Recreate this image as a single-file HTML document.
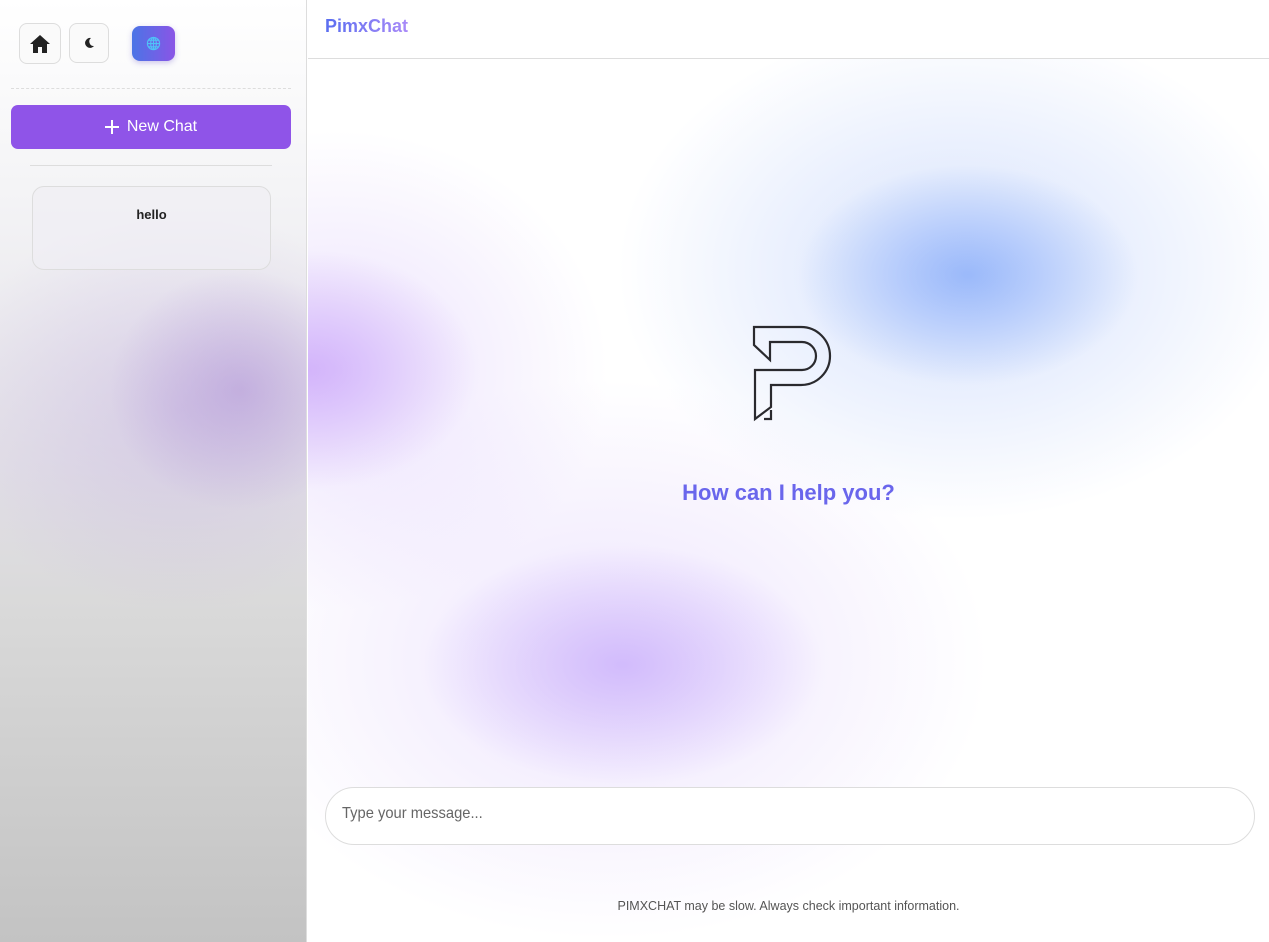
<!DOCTYPE html>
<html><head><meta charset="utf-8"><style>
*{box-sizing:border-box;margin:0;padding:0}
body{width:1269px;height:942px;overflow:hidden;font-family:"Liberation Sans",sans-serif;position:relative;background:#fff}
.side{position:absolute;left:0;top:0;width:307px;height:942px;border-right:1px solid #ddd;
background:
radial-gradient(ellipse 130px 120px at 240px 390px,rgba(175,145,215,.55),rgba(175,145,215,0) 100%),
radial-gradient(ellipse 240px 200px at 180px 410px,rgba(195,175,225,.45),rgba(195,175,225,0) 100%),
linear-gradient(180deg,#fff 0%,#f4f4f6 20%,#e2e0e6 50%,#d9d9d9 65%,#c3c3c3 100%);}
.btn{position:absolute;top:23px;width:40px;height:40px;border:1px solid #ddd;border-radius:8px;background:#fafafa;display:flex;align-items:center;justify-content:center}
.glb{position:absolute;left:132px;top:26px;width:43px;height:35px;border-radius:8px;background:linear-gradient(90deg,#4b74e6,#8a55e6);display:flex;align-items:center;justify-content:center;box-shadow:0 2px 6px rgba(100,80,200,.3)}
.dash{position:absolute;left:11px;top:88px;width:280px;border-top:1px dashed #ddd}
.new{position:absolute;left:11px;top:105px;width:280px;height:44px;border-radius:7px;background:#8f54e8;color:#fff;font-size:16px;display:flex;align-items:center;justify-content:center;gap:8px}
.sep{position:absolute;left:30px;top:165px;width:242px;border-top:1px solid #ddd}
.card{position:absolute;left:32px;top:186px;width:239px;height:84px;border:1px solid #ddd;border-radius:12px;background:rgba(240,238,244,.7);text-align:center;padding-top:20px;font-weight:bold;font-size:13px;color:#222}
.main{position:absolute;left:308px;top:0;width:961px;height:942px;overflow:hidden;
background:
radial-gradient(ellipse 170px 110px at 660px 275px,rgba(140,175,250,.8),rgba(140,175,250,0) 100%),
radial-gradient(ellipse 340px 250px at 650px 270px,rgba(185,205,250,.6),rgba(185,205,250,0) 100%),
radial-gradient(ellipse 170px 120px at 0px 370px,rgba(200,160,250,.7),rgba(200,160,250,0) 100%),
radial-gradient(ellipse 270px 240px at 30px 370px,rgba(215,195,250,.5),rgba(215,195,250,0) 100%),
radial-gradient(ellipse 200px 120px at 315px 665px,rgba(205,180,252,.85),rgba(205,180,252,0) 100%),
radial-gradient(ellipse 380px 280px at 300px 660px,rgba(225,210,252,.6),rgba(225,210,252,0) 100%),#fff}
.hdr{position:absolute;left:0;top:0;width:961px;height:59px;border-bottom:1px solid #ddd;background:rgba(255,255,255,.85)}
.ttl{position:absolute;left:17px;top:16px;font-size:18px;font-weight:bold;background:linear-gradient(90deg,#5a6ef0,#a98af8);-webkit-background-clip:text;color:transparent}
.help{position:absolute;left:0;width:961px;top:480px;text-align:center;color:#6a66ec;font-size:22px;font-weight:bold}
.inp{position:absolute;left:17px;top:787px;width:930px;height:58px;border:1px solid #ddd;border-radius:29px;background:#fff;font-size:16px;color:#666;padding:17px 16px}
.inp span{display:inline-block;transform:scaleX(.92);transform-origin:left}
.foot{position:absolute;left:0;width:961px;top:899px;text-align:center;font-size:12.5px;color:#555}
</style></head><body>
<div class="side">
 <div class="btn" style="left:19px;width:42px;height:41px"><svg width="22" height="20" viewBox="0 0 22 20"><path d="M11 1 L1 10 H4 V19 H9 V13 H13 V19 H18 V10 H21 Z" fill="#222"/></svg></div>
 <div class="btn" style="left:69px"><svg width="12" height="12" viewBox="0 0 12 12"><path d="M8 1 A5 5 0 1 0 11 9 A4.5 4.5 0 0 1 8 1Z" fill="#222"/></svg></div>
 <div class="glb"><svg width="15" height="15" viewBox="0 0 16 16" fill="none" stroke="#4fc3f7" stroke-width="1.2"><circle cx="8" cy="8" r="6.5"/><ellipse cx="8" cy="8" rx="3" ry="6.5"/><path d="M1.5 8H14.5M2.5 4.5H13.5M2.5 11.5H13.5M8 1.5V14.5"/></svg></div>
 <div class="dash"></div>
 <div class="new"><svg width="14" height="14" viewBox="0 0 14 14"><path d="M7 0V14M0 7H14" stroke="#fff" stroke-width="2"/></svg>New Chat</div>
 <div class="sep"></div>
 <div class="card">hello</div>
</div>
<div class="main">
 <div class="hdr"><div class="ttl">PimxChat</div></div>
 <svg style="position:absolute;left:422px;top:310px" width="120" height="120" viewBox="0 0 120 120" fill="none" stroke="#2a2a2e" stroke-width="2.2" stroke-linejoin="miter">
  <path d="M24 17 H71 A29 29 0 0 1 71 75 H41 V97 L25 109 V60 H72 A14 14 0 0 0 72 32 H40 V50 L24 35 Z"/>
  <path d="M34 109 H41 V100"/>
 </svg>
 <div class="help">How can I help you?</div>
 <div class="inp"><span>Type your message...</span></div>
 <div class="foot">PIMXCHAT may be slow. Always check important information.</div>
</div>
</body></html>
